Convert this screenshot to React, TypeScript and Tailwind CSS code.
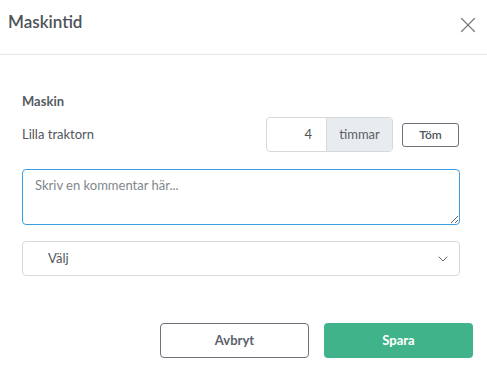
import { X, ChevronDown } from 'lucide-react'

const App: React.FC = () => {
  return (
    <div className="w-[487px] h-[374px] bg-white text-[#50565c] font-['Lato','Liberation_Sans',sans-serif]">
      {/* header */}
      <div className="h-[55px] flex justify-between border-b border-[#e6e6e6] pl-2 pr-[6px]">
        <h2 className="pt-[11px] text-[17px] leading-[22px] font-semibold text-[#4d5359]">Maskintid</h2>
        <button className="mt-[12px] h-[26px] w-[26px] flex items-center justify-center text-[#7a7a7a]">
          <X size={26} strokeWidth={1.1} />
        </button>
      </div>

      {/* body */}
      <div className="pl-[22px] pr-[27px] pt-[37px]">
        <div className="text-[13px] leading-[18px] font-bold text-[#555b61]">Maskin</div>
        <div className="mt-[7px] flex items-center">
          <span className="flex-1 text-[13px] text-[#50565c]">Lilla traktorn</span>
          <div className="flex h-[35px] w-[127px] rounded-[4px] border border-[#d6d9dc] overflow-hidden">
            <div className="w-[59px] flex items-center justify-end pr-[14px] text-[13px] text-[#50565c]">4</div>
            <div className="flex-1 flex items-center justify-center bg-[#e9ecef] border-l border-[#d6d9dc] text-[13px] text-[#5a6066]">timmar</div>
          </div>
          <button className="ml-[9px] mr-[1px] h-[24px] w-[57px] rounded-[3px] border border-[#6c737a] text-[12px] font-semibold text-[#50565c]">Töm</button>
        </div>
        <textarea
          className="mt-[17px] block w-full h-[56px] rounded-[4px] border border-[#3a9ee0] px-[12px] py-[6px] text-[13px] text-[#50565c] placeholder:text-[#80868c] outline-none resize-y"
          placeholder="Skriv en kommentar här..."
        />
        <div className="mt-[16px] h-[35px] flex items-center justify-between rounded-[4px] border border-[#d6d9dc] pl-[25px] pr-[8px]">
          <span className="text-[13px] text-[#50565c]">Välj</span>
          <ChevronDown size={16} strokeWidth={1.4} className="text-[#555]" />
        </div>
      </div>

      {/* footer */}
      <div className="mt-[47px] flex justify-end gap-[15px] pr-[14px]">
        <button className="h-[35px] w-[149px] rounded-[4px] border border-[#6c737a] text-[13px] font-bold text-[#5c636a]">Avbryt</button>
        <button className="h-[35px] w-[149px] rounded-[4px] bg-[#41b38a] text-[13px] font-bold text-white">Spara</button>
      </div>
    </div>
  )
}

export default App
